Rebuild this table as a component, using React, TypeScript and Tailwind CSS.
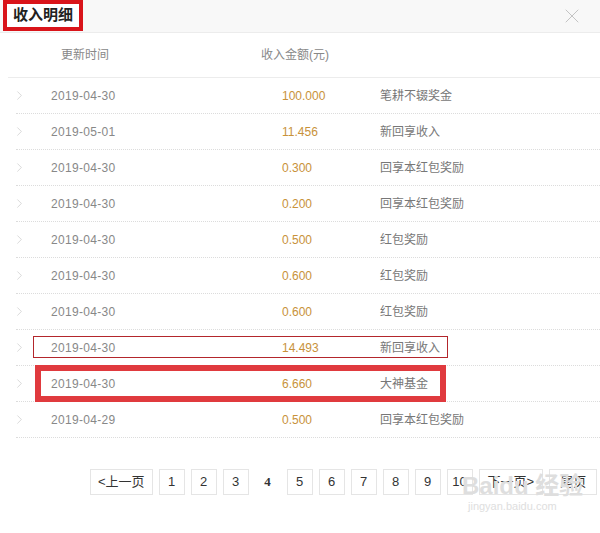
import { X, ChevronRight } from "lucide-react"

const rows = [
  { date: "2019-04-30", amount: "100.000", desc: "笔耕不辍奖金" },
  { date: "2019-05-01", amount: "11.456", desc: "新回享收入" },
  { date: "2019-04-30", amount: "0.300", desc: "回享本红包奖励" },
  { date: "2019-04-30", amount: "0.200", desc: "回享本红包奖励" },
  { date: "2019-04-30", amount: "0.500", desc: "红包奖励" },
  { date: "2019-04-30", amount: "0.600", desc: "红包奖励" },
  { date: "2019-04-30", amount: "0.600", desc: "红包奖励" },
  { date: "2019-04-30", amount: "14.493", desc: "新回享收入", mark: "thin" },
  { date: "2019-04-30", amount: "6.660", desc: "大神基金", mark: "thick" },
  { date: "2019-04-29", amount: "0.500", desc: "回享本红包奖励" },
]

const pages = ["1", "2", "3", "4", "5", "6", "7", "8", "9", "10"]

export default function App() {
  return (
    <div
      className="w-[600px] h-[533px] bg-white overflow-hidden relative text-[12px] text-[#666]"
      style={{ fontFamily: '"Liberation Sans", "Noto Sans CJK SC", sans-serif' }}
    >
      {/* header */}
      <div className="h-[33px] bg-[#f8f8f8] border-b border-[#ececec] flex items-center justify-between">
        <div className="h-[31px] ml-[3px] self-start border-[4px] border-[#d9141a] px-[6px] flex items-center bg-white">
          <span className="text-[15px] font-bold text-[#222]">收入明细</span>
        </div>
        <X className="w-[24px] h-[24px] text-[#c4c4c4] mr-[16px]" strokeWidth={1} />
      </div>

      {/* column titles */}
      <div className="ml-[8px] h-[45px] border-b border-[#ececec] flex items-center text-[#888]">
        <span className="ml-[53px] w-[200px]">更新时间</span>
        <span>收入金额(元)</span>
      </div>

      {/* rows */}
      <div className="ml-[16px]">
        {rows.map((r, i) => (
          <div key={i} className="h-[36px] border-b border-dotted border-[#dcdcdc] flex items-center relative">
            <ChevronRight className="w-[15px] h-[15px] text-[#c4c4c4] -ml-[4px]" strokeWidth={1} />
            <span className="ml-[24px] w-[231px] text-[#888] tracking-[0.3px]">{r.date}</span>
            <span className="w-[98px] text-[#c8923a]">{r.amount}</span>
            <span className="text-[#777]">{r.desc}</span>
            {r.mark === "thin" && (
              <div className="absolute left-[17px] w-[415px] top-[6px] h-[22px] border border-[#b3262c] pointer-events-none" />
            )}
            {r.mark === "thick" && (
              <div className="absolute left-[19px] w-[411px] -top-[1px] h-[37px] border-[6px] border-[#e03a3e] pointer-events-none" />
            )}
          </div>
        ))}
      </div>

      {/* pagination */}
      <div className="mt-[31px] ml-[90px] flex items-center gap-[6px] text-[13px] text-[#333]">
        <div className="h-[26px] px-[7px] border border-[#e5e5e5] flex items-center">&lt;上一页</div>
        {pages.map((p) =>
          p === "4" ? (
            <div key={p} className="w-[26px] h-[26px] flex items-center justify-center font-bold" style={{ fontFamily: '"Liberation Serif", serif' }}>
              {p}
            </div>
          ) : (
            <div key={p} className="w-[26px] h-[26px] border border-[#e5e5e5] flex items-center justify-center">
              {p}
            </div>
          )
        )}
        <div className="h-[26px] px-[8px] border border-[#e5e5e5] flex items-center">下一页&gt;</div>
        <div className="h-[26px] px-[10px] border border-[#e5e5e5] flex items-center">尾页</div>
      </div>

      {/* watermark */}
      <div className="absolute left-[462px] top-[474px] text-[#dedede] leading-none pointer-events-none select-none whitespace-nowrap">
        <div className="text-[24px] font-bold">Baidu 经验</div>
        <div className="text-[11px] mt-[3px] ml-[6px]">jingyan.baidu.com</div>
      </div>
    </div>
  )
}
